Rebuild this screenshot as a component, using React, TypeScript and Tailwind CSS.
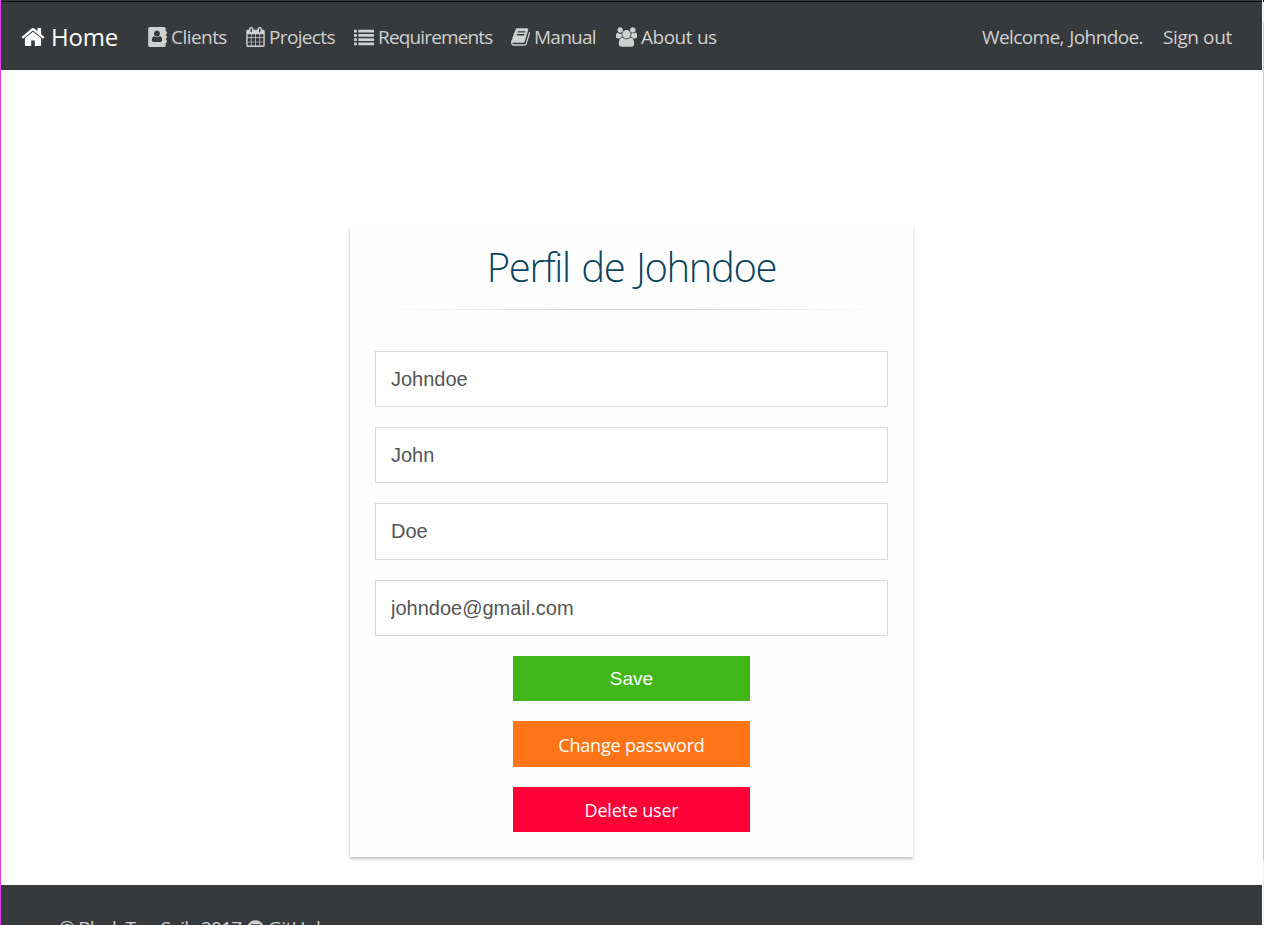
import type { ReactNode } from "react";
import { FaGithub } from "react-icons/fa";

const HOME =
  "M1472 992v480q0 26-19 45t-45 19h-384v-384h-256v384h-384q-26 0-45-19t-19-45v-480q0-1 .5-3t.5-3l575-474 575 474q1 2 1 6zm223-69l-62 74q-8 9-21 11h-3q-13 0-21-7l-692-577-692 577q-12 8-24 7-13-2-21-11l-62-74q-8-10-7-23.5t11-21.5l719-599q32-26 76-26t76 26l244 204v-195q0-14 9-23t23-9h192q14 0 23 9t9 23v408l219 182q10 8 11 21.5t-7 23.5z";
const ADDRESS_BOOK =
  "M160 0h1248q66 0 113 47t47 113v224h64q32 0 32 32v192q0 32-32 32h-64v128h64q32 0 32 32v192q0 32-32 32h-64v128h64q32 0 32 32v192q0 32-32 32h-64v224q0 66-47 113t-113 47h-1248q-66 0-113-47t-47-113v-1472q0-66 47-113t113-47zM784 320q-110 0-188 78t-78 188q0 110 78 188t188 78 188-78 78-188-78-188-188-78zM470 1344h628q65 0 106-42t41-118q0-140-51-243t-160-103q-110 85-250 85t-250-85q-109 0-160 103t-51 243q0 76 41 118t106 42z";
const CALENDAR =
  "M192 1664h288v-288h-288v288zm352 0h320v-288h-320v288zm-352-352h288v-320h-288v320zm352 0h320v-320h-320v320zm-352-384h288v-288h-288v288zm736 736h320v-288h-320v288zm-384-736h320v-288h-320v288zm768 736h288v-288h-288v288zm-384-352h320v-320h-320v320zm-352-864v-288q0-13-9.5-22.5t-22.5-9.5h-64q-13 0-22.5 9.5t-9.5 22.5v288q0 13 9.5 22.5t22.5 9.5h64q13 0 22.5-9.5t9.5-22.5zm736 864h288v-320h-288v320zm-384-384h320v-288h-320v288zm384 0h288v-288h-288v288zm32-480v-288q0-13-9.5-22.5t-22.5-9.5h-64q-13 0-22.5 9.5t-9.5 22.5v288q0 13 9.5 22.5t22.5 9.5h64q13 0 22.5-9.5t9.5-22.5zm384-64v1280q0 52-38 90t-90 38h-1408q-52 0-90-38t-38-90v-1280q0-52 38-90t90-38h128v-96q0-66 47-113t113-47h64q66 0 113 47t47 113v96h384v-96q0-66 47-113t113-47h64q66 0 113 47t47 113v96h128q52 0 90 38t38 90z";
const LIST =
  "M0 256h256v256h-256zM384 256h1408v256h-1408zM0 640h256v256h-256zM384 640h1408v256h-1408zM0 1024h256v256h-256zM384 1024h1408v256h-1408zM0 1408h256v256h-256zM384 1408h1408v256h-1408z";
const BOOK =
  "M1703 478q40 57 18 129l-275 906q-19 64-76.5 107.5t-122.5 43.5h-923q-77 0-148.5-53.5t-99.5-131.5q-24-67-2-127 0-4 3-27t4-37q1-8-3-21.5t-3-19.5q2-11 8-21t16.5-23.5 16.5-23.5q23-38 45-91.5t30-91.5q3-10 .5-30t-.5-28q3-11 17-28t17-23q21-36 42-92t25-90q1-9-2.5-32t.5-28q4-13 22-30.5t22-22.5q19-26 42.5-84.5t27.5-96.5q1-8-3-25.5t-2-26.5q2-8 9-18t18-23 17-21q8-12 16.5-30.5t15-35 16-36 19.5-32 26.5-23.5 36-11.5 47.5 5.5l-1 3q38-9 51-9h761q74 0 114 56t18 130l-274 906q-36 119-71.5 153.5t-128.5 34.5h-869q-27 0-38 15-11 16-1 43 24 70 144 70h923q29 0 56-15.5t35-41.5l300-987q7-22 5-57 38 15 59 43zm-1064 2q-4 13 2 22.5t20 9.5h608q13 0 25.5-9.5t16.5-22.5l21-64q4-13-2-22.5t-20-9.5h-608q-13 0-25.5 9.5t-16.5 22.5zm-83 256q-4 13 2 22.5t20 9.5h608q13 0 25.5-9.5t16.5-22.5l21-64q4-13-2-22.5t-20-9.5h-608q-13 0-25.5 9.5t-16.5 22.5z";
const USERS =
  "M593 896q-162 5-265 128h-134q-82 0-138-40.5t-56-118.5q0-353 124-353 6 0 43.5 21t97.5 42.5 119 21.5q67 0 133-23-5 37-5 66 0 159 93 293zm1071 637q0 120-73 189.5t-194 69.5h-874q-121 0-194-69.5t-73-189.5q0-53 3.5-103.5t14-109 26.5-108.5 43-97.5 62-81 85.5-53.5 111.5-20q10 0 43 21.5t73 48 107 48 135 21.5 135-21.5 107-48 73-48 43-21.5q61 0 111.5 20t85.5 53.5 62 81 43 97.5 26.5 108.5 14 109 3.5 103.5zm-1024-1277q0 106-75 181t-181 75-181-75-75-181 75-181 181-75 181 75 75 181zm704 384q0 159-112.5 271.5t-271.5 112.5-271.5-112.5-112.5-271.5 112.5-271.5 271.5-112.5 271.5 112.5 112.5 271.5zm576 225q0 78-56 118.5t-138 40.5h-134q-103-123-265-128 93-134 93-293 0-29-5-66 66 23 133 23 59 0 119-21.5t97.5-42.5 43.5-21q124 0 124 353zm-128-609q0 106-75 181t-181 75-181-75-75-181 75-181 181-75 181 75 75 181z";

function Icon({ d, box, className }: { d: string; box: string; className: string }) {
  return (
    <svg viewBox={box} className={`shrink-0 ${className}`} fill="currentColor" fillRule="evenodd" aria-hidden="true">
      <path d={d} />
    </svg>
  );
}

function NavItem({ width, spacing, icon, children }: { width: string; spacing: string; icon: ReactNode; children: string }) {
  return (
    <a href="#" className={`flex shrink-0 items-center gap-1 whitespace-nowrap ${width}`}>
      {icon}
      <span className={spacing}>{children}</span>
    </a>
  );
}

function Field({ value, height = "h-14" }: { value: string; height?: string }) {
  return (
    <input
      type="text"
      defaultValue={value}
      className={`mb-5 block w-full border border-[#d9d9d9] bg-white px-[15px] font-['Liberation_Sans',sans-serif] text-xl text-[#555] outline-none ${height}`}
    />
  );
}

export default function App() {
  return (
    <div className="flex h-[925px] w-[1264px] flex-col overflow-hidden bg-white font-['Open_Sans','Noto_Sans',sans-serif]">
      <div className="flex min-h-0 flex-1">
        <div className="w-px shrink-0 bg-[#e040e4]" />
        <div className="flex w-[1261px] shrink-0 flex-col">
          <div className="h-px shrink-0 bg-[#36383b]" />
          <div className="h-px shrink-0 bg-[#0c0c0c]" />
          <nav className="flex h-17 shrink-0 items-center bg-[#373a3c] pt-0.5 pl-5 text-[19px] leading-7 text-[#cfd0d0]">
            <a href="#" className="flex w-[127px] shrink-0 items-center gap-1.5 text-2xl text-white">
              <Icon d={HOME} box="89 253 1614 1283" className="h-[18px] w-6" />
              <span className="tracking-[-0.2px]">Home</span>
            </a>
            <NavItem width="w-[98px]" spacing="tracking-[-0.55px]" icon={<Icon d={ADDRESS_BOOK} box="0 0 1664 1792" className="h-5 w-[19px]" />}>
              Clients
            </NavItem>
            <NavItem width="w-[108px]" spacing="tracking-[-0.65px]" icon={<Icon d={CALENDAR} box="64 0 1664 1792" className="h-5 w-[19px]" />}>
              Projects
            </NavItem>
            <NavItem width="w-[157px]" spacing="tracking-[-0.85px]" icon={<Icon d={LIST} box="0 128 1792 1664" className="h-[19px] w-5" />}>
              Requirements
            </NavItem>
            <NavItem width="w-[105px]" spacing="tracking-[-0.75px]" icon={<Icon d={BOOK} box="64 128 1664 1536" className="h-[18px] w-[19px]" />}>
              Manual
            </NavItem>
            <NavItem width="w-[366px]" spacing="tracking-[-0.5px] [word-spacing:0.5px]" icon={<Icon d={USERS} box="0 0 1920 1792" className="h-5 w-[21px]" />}>
              About us
            </NavItem>
            <span className="w-[181px] shrink-0 whitespace-nowrap tracking-[-0.6px] [word-spacing:1px]">Welcome, Johndoe.</span>
            <a href="#" className="shrink-0 whitespace-nowrap tracking-[-0.4px]">Sign out</a>
          </nav>

          <main className="flex h-[815px] shrink-0 flex-col items-center bg-white pt-[157px]">
            <form className="flex h-[630px] w-[563px] flex-col items-center bg-[#fefefe] px-[25px] shadow-[0_2px_3px_rgba(0,0,0,0.25)]">
              <h1 className="flex h-[82px] shrink-0 items-center pb-0.5 whitespace-nowrap text-[40px] font-light tracking-[-1.35px] text-[#09435f] [word-spacing:2.5px]">
                Perfil de Johndoe
              </h1>
              <div className="mb-[41px] h-px w-[513px] shrink-0 bg-linear-to-r from-transparent via-[#ccc] to-transparent" />
              <Field value="Johndoe" />
              <Field value="John" />
              <Field value="Doe" height="h-[57px]" />
              <Field value="johndoe@gmail.com" />
              <button type="button" className="mb-5 h-[45px] w-[237px] shrink-0 bg-[#40b619] pt-px font-['Liberation_Sans',sans-serif] text-[19px] text-white">
                Save
              </button>
              <button type="button" className="mb-5 h-[46px] w-[237px] shrink-0 bg-[#ff7518] pt-0.5 text-lg tracking-[-0.2px] text-white">
                Change password
              </button>
              <button type="button" className="h-[45px] w-[237px] shrink-0 bg-[#ff0039] text-lg tracking-[-0.2px] text-white">
                Delete user
              </button>
            </form>
          </main>

          <footer className="flex h-10 shrink-0 items-start overflow-hidden bg-[#373a3c] pt-[29px] pl-[58px] text-[19px] leading-7 text-[#cfd0d0]">
            <span className="w-[188px] shrink-0 whitespace-nowrap tracking-[-0.75px]">© Black Top Sails 2017</span>
            <FaGithub className="mt-1.5 mr-1 h-[17px] w-[17px] shrink-0" />
            <a href="#" className="tracking-[-0.6px]">GitHub</a>
          </footer>
        </div>
        <div className="w-px shrink-0 bg-white" />
        <div className="flex w-px shrink-0 flex-col bg-[#f0f0f0]">
          <div className="h-0.5 shrink-0 bg-[#0c0c0c]" />
          <div className="mt-[21px] h-[837px] shrink-0 bg-[#cdcdcd]" />
        </div>
      </div>
    </div>
  );
}
